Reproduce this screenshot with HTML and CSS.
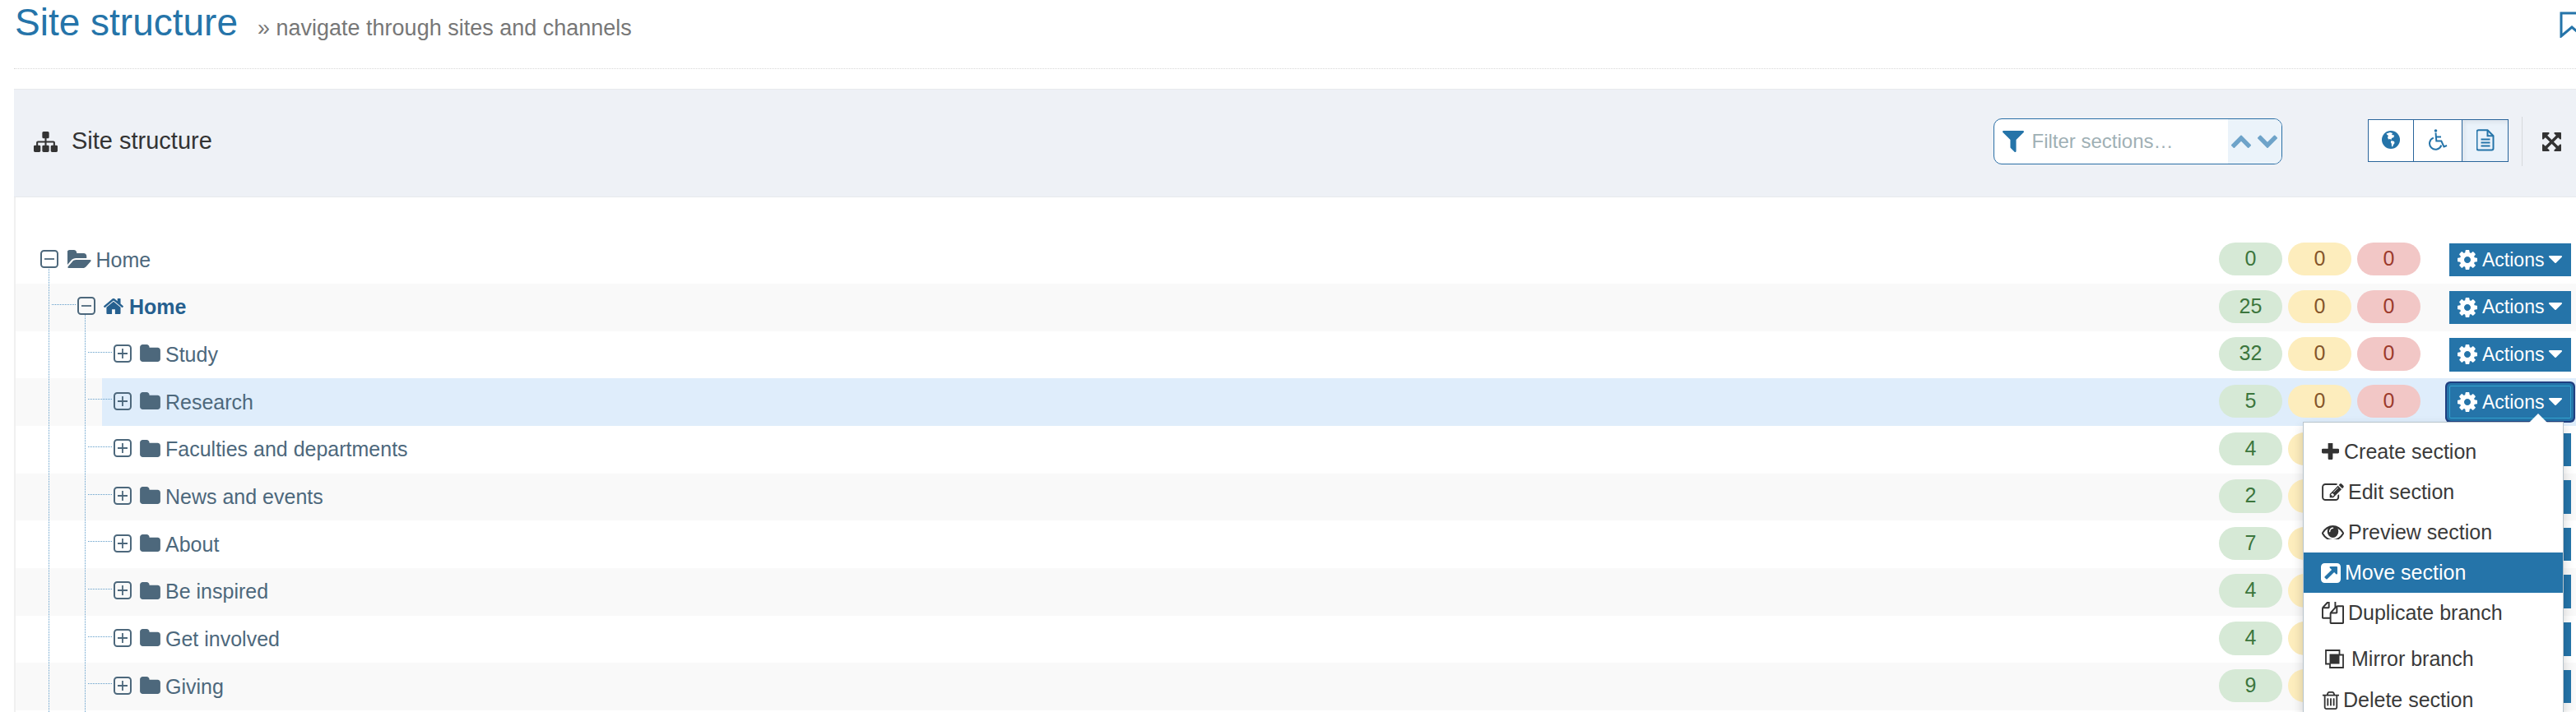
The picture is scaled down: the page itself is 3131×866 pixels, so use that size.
FILE: index.html
```html
<!DOCTYPE html>
<html lang="en">
<head>
    <meta charset="UTF-8">
    <meta name="viewport" content="width=device-width, initial-scale=1.0">
    <title>Site structure</title>
    <link rel="stylesheet" href="styles.css">
</head>
<body>
    <!-- icon sprite -->
    <svg class="sprite" xmlns="http://www.w3.org/2000/svg">
        <symbol id="i-folder" viewBox="64 128 1664 1408"><path d="M1728 608v704q0 92-66 158t-158 66h-1216q-92 0-158-66t-66-158v-960q0-92 66-158t158-66h320q92 0 158 66t66 158v32h672q92 0 158 66t66 158z"/></symbol>
        <symbol id="i-folder-open" viewBox="9 128 1806 1408"><path d="M1815 952q0 31-31 66l-336 396q-43 51-120.5 86.5t-143.5 35.5h-1088q-34 0-60.5-13t-26.5-43q0-31 31-66l336-396q43-51 120.5-86.5t143.5-35.5h1088q34 0 60.5 13t26.5 43zm-343-344v160h-832q-94 0-197 47.5t-164 119.5l-337 396-5 6q0-4-.5-12.5t-.5-12.5v-960q0-92 66-158t158-66h320q92 0 158 66t66 158v32h544q92 0 158 66t66 158z"/></symbol>
        <symbol id="i-home" viewBox="97 256 1600 1280"><path d="M1472 992v480q0 26-19 45t-45 19h-384v-384h-256v384h-384q-26 0-45-19t-19-45v-480q0-1 .5-3t.5-3l575-474 575 474q1 2 1 6zm223-69l-62 74q-8 9-21 11h-3q-13 0-21-7l-692-577-692 577q-12 8-24 7-13-2-21-11l-62-74q-8-10-7-23.5t11-21.5l719-599q32-26 76-26t76 26l244 204v-195q0-14 9-23t23-9h192q14 0 23 9t9 23v408l219 182q10 8 11 21.5t-7 23.5z"/></symbol>
        <symbol id="i-cog" viewBox="128 128 1536 1536"><path d="M1152 896q0-106-75-181t-181-75-181 75-75 181 75 181 181 75 181-75 75-181zm512-109v222q0 12-8 23t-20 13l-185 28q-19 54-39 91 35 50 107 138 10 12 10 25t-9 23q-27 37-99 108t-94 71q-12 0-26-9l-138-108q-44 23-91 38-16 136-29 186-7 28-36 28h-222q-14 0-24.5-8.5t-11.5-21.5l-28-184q-49-16-90-37l-141 107q-10 9-25 9-14 0-25-11-126-114-165-168-7-10-7-23 0-12 8-23 15-21 51-66.5t54-70.5q-27-50-41-99l-183-27q-13-2-21-12.5t-8-23.5v-222q0-12 8-23t19-13l186-28q14-46 39-92-40-57-107-138-10-12-10-24 0-10 9-23 26-36 98.5-107.5t94.5-71.5q13 0 26 10l138 107q44-23 91-38 16-136 29-186 7-28 36-28h222q14 0 24.5 8.5t11.5 21.5l28 184q49 16 90 37l142-107q9-9 24-9 13 0 25 10 129 119 165 170 7 8 7 22 0 12-8 23-15 21-51 66.5t-54 70.5q26 50 41 98l183 28q13 2 21 12.5t8 23.5z"/></symbol>
        <symbol id="i-caret" viewBox="384 640 1024 576"><path d="M1408 704q0 26-19 45l-448 448q-19 19-45 19t-45-19l-448-448q-19-19-19-45t19-45 45-19h896q26 0 45 19t19 45z"/></symbol>
        <symbol id="i-toggle-plus" viewBox="0 0 22 22"><rect x="1" y="1" width="20" height="20" rx="3.5" fill="none" stroke="currentColor" stroke-width="2"/><path d="M5 11h12M11 5v12" fill="none" stroke="currentColor" stroke-width="1.8"/></symbol>
        <symbol id="i-toggle-minus" viewBox="0 0 22 22"><rect x="1" y="1" width="20" height="20" rx="3.5" fill="none" stroke="currentColor" stroke-width="2"/><path d="M5 11h12" fill="none" stroke="currentColor" stroke-width="1.8"/></symbol>
    </svg>

    <header class="page-head">
        <h1 class="page-title">Site structure</h1>
        <p class="page-sub">&raquo; navigate through sites and channels</p>
        <svg class="bookmark" viewBox="0 0 30 32"><path d="M2 2h26v28l-13-11L2 30z"/></svg>
    </header>

    <main class="panel">
        <div class="panel-head">
            <svg class="panel-icon" viewBox="0 128 1792 1536"><path d="M1792 1248v320q0 40-28 68t-68 28h-320q-40 0-68-28t-28-68v-320q0-40 28-68t68-28h96v-192h-512v192h96q40 0 68 28t28 68v320q0 40-28 68t-68 28h-320q-40 0-68-28t-28-68v-320q0-40 28-68t68-28h96v-192h-512v192h96q40 0 68 28t28 68v320q0 40-28 68t-68 28h-320q-40 0-68-28t-28-68v-320q0-40 28-68t68-28h96v-192q0-52 38-90t90-38h512v-192h-96q-40 0-68-28t-28-68v-320q0-40 28-68t68-28h320q40 0 68 28t28 68v320q0 40-28 68t-68 28h-96v192h512q52 0 90 38t38 90v192h96q40 0 68 28t28 68z"/></svg>
            <h2 class="panel-title">Site structure</h2>

            <div class="filter">
                <svg class="filter-icon" viewBox="192 256 1408 1408"><path d="M1595 295q17 41-14 70l-493 493v742q0 42-39 59-13 5-25 5-27 0-45-19l-256-256q-19-19-19-45v-486l-493-493q-31-29-14-70 17-39 59-39h1280q42 0 59 39z"/></svg>
                <input class="filter-input" type="text" placeholder="Filter sections&hellip;">
                <div class="filter-nav">
                    <svg viewBox="101 448 1590 1067"><path d="M1683 1331l-166 165q-19 19-45 19t-45-19l-531-531-531 531q-19 19-45 19t-45-19l-166-165q-19-19-19-45.5t19-45.5l742-741q19-19 45-19t45 19l742 741q19 19 19 45.5t-19 45.5z"/></svg>
                    <svg viewBox="101 501 1590 1067"><path d="M1683 808l-742 741q-19 19-45 19t-45-19l-742-741q-19-19-19-45.5t19-45.5l166-165q19-19 45-19t45 19l531 531 531-531q19-19 45-19t45 19l166 165q19 19 19 45.5t-19 45.5z"/></svg>
                </div>
            </div>

            <div class="view-toggle">
                <button class="view-btn" type="button">
                    <svg class="icon-globe" viewBox="0 0 22 22">
                        <circle cx="11" cy="11" r="11" fill="#2574a9"/>
                        <path fill="#fff" d="M5.5 3.5L10 2l3 1-1 2 3 .5-.5 2.5-2.5 1-.5 2-1.5-1-2 .5-1-2.500 1-2-1.500-1z"/>
                        <path fill="#fff" d="M11.5 12l3.500 1 .5 2-1.500 2-1 2.500-1-.5-.2-3.200-1-1.800z"/>
                    </svg>
                </button>
                <button class="view-btn" type="button">
                    <svg class="icon-stroke icon-wheel" viewBox="0 0 24 26">
                        <circle cx="9.5" cy="2" r="1.8" fill="#2574a9" stroke="none"/>
                        <path d="M9.5 4.500l.8 10h6l3.200 7 3.500-1.500M10 9.500h6"/>
                        <path d="M6.800 10.600a7.300 7.300 0 1 0 9.500 9"/>
                    </svg>
                </button>
                <button class="view-btn view-btn-active" type="button">
                    <svg class="icon-stroke icon-doc" viewBox="0 0 22 27">
                        <path d="M2.500 1.200h11l7 7v15.300a2 2 0 0 1-2 2h-16a2 2 0 0 1-2-2V3.200a2 2 0 0 1 2-2z"/>
                        <path d="M13.500 1.200v7h7"/>
                        <path d="M5.500 12.500h11M5.500 16.500h11M5.500 20.500h11"/>
                    </svg>
                </button>
            </div>
            <span class="head-sep"></span>
            <svg class="expand" viewBox="128 128 1536 1536"><path d="M1411 541l-355 355 355 355 144-144q29-31 70-14 39 17 39 59v448q0 26-19 45t-45 19h-448q-42 0-59-40-17-39 14-69l144-144-355-355-355 355 144 144q31 30 14 69-17 40-59 40h-448q-26 0-45-19t-19-45v-448q0-42 40-59 39-17 69 14l144 144 355-355-355-355-144 144q-19 19-45 19-12 0-24-5-40-17-40-59v-448q0-26 19-45t45-19h448q42 0 59 40 17 39-14 69l-144 144 355 355 355-355-144-144q-31-30-14-69 17-40 59-40h448q26 0 45 19t19 45v448q0 42-39 59-13 5-25 5-26 0-45-19z"/></svg>
        </div>

        <div class="tree">
            <span class="guide guide-1"></span>
            <span class="guide guide-2"></span>

            <div class="row depth-0">
                <div class="row-body">
                    <svg class="toggle"><use href="#i-toggle-minus"/></svg>
                    <svg class="node-icon node-open"><use href="#i-folder-open"/></svg>
                    <span class="label">Home</span>
                    <div class="badges"><span class="badge badge-ok">0</span><span class="badge badge-warn">0</span><span class="badge badge-err">0</span></div>
                    <div class="actions"><button class="btn" type="button"><svg class="btn-cog"><use href="#i-cog"/></svg>Actions<svg class="btn-caret"><use href="#i-caret"/></svg></button></div>
                </div>
            </div>
            <div class="row depth-1">
                <div class="row-body">
                    <svg class="toggle"><use href="#i-toggle-minus"/></svg>
                    <svg class="node-icon node-home"><use href="#i-home"/></svg>
                    <span class="label label-home">Home</span>
                    <div class="badges"><span class="badge badge-ok">25</span><span class="badge badge-warn">0</span><span class="badge badge-err">0</span></div>
                    <div class="actions"><button class="btn" type="button"><svg class="btn-cog"><use href="#i-cog"/></svg>Actions<svg class="btn-caret"><use href="#i-caret"/></svg></button></div>
                </div>
            </div>
            <div class="row depth-2">
                <div class="row-body">
                    <svg class="toggle"><use href="#i-toggle-plus"/></svg>
                    <svg class="node-icon"><use href="#i-folder"/></svg>
                    <span class="label">Study</span>
                    <div class="badges"><span class="badge badge-ok">32</span><span class="badge badge-warn">0</span><span class="badge badge-err">0</span></div>
                    <div class="actions"><button class="btn" type="button"><svg class="btn-cog"><use href="#i-cog"/></svg>Actions<svg class="btn-caret"><use href="#i-caret"/></svg></button></div>
                </div>
            </div>
            <div class="row depth-2">
                <div class="row-body row-selected">
                    <svg class="toggle"><use href="#i-toggle-plus"/></svg>
                    <svg class="node-icon"><use href="#i-folder"/></svg>
                    <span class="label">Research</span>
                    <div class="badges"><span class="badge badge-ok">5</span><span class="badge badge-warn">0</span><span class="badge badge-err">0</span></div>
                    <div class="actions">
                        <button class="btn btn-focus" type="button"><svg class="btn-cog"><use href="#i-cog"/></svg>Actions<svg class="btn-caret"><use href="#i-caret"/></svg></button>
                        <ul class="menu">
                            <li class="menu-item">
                                <svg class="mi mi-create" viewBox="192 192 1408 1408"><path d="M1600 736v192q0 40-28 68t-68 28h-416v416q0 40-28 68t-68 28h-192q-40 0-68-28t-28-68v-416h-416q-40 0-68-28t-28-68v-192q0-40 28-68t68-28h416v-416q0-40 28-68t68-28h192q40 0 68 28t28 68v416h416q40 0 68 28t28 68z"/></svg>
                                Create section
                            </li>
                            <li class="menu-item">
                                <svg class="mi mi-edit" viewBox="0 128 1792 1408"><path d="M888 1184l116-116-152-152-116 116v56h96v96h56zm440-720q-16-16-33 1l-350 350q-17 17-1 33t33-1l350-350q17-17 1-33zm80 594v190q0 119-84.5 203.5t-203.5 84.5h-832q-119 0-203.5-84.5t-84.5-203.5v-832q0-119 84.5-203.5t203.5-84.5h832q63 0 117 25 15 7 18 23 3 17-9 29l-49 49q-14 14-32 8-23-6-45-6h-832q-66 0-113 47t-47 113v832q0 66 47 113t113 47h832q66 0 113-47t47-113v-126q0-13 9-22l64-64q15-15 35-7t20 29zm-96-738l288 288-672 672h-288v-288zm444 132l-92 92-288-288 92-92q28-28 68-28t68 28l152 152q28 28 28 68t-28 68z"/></svg>
                                Edit section
                            </li>
                            <li class="menu-item">
                                <svg class="mi mi-eye" viewBox="0 384 1792 1024" preserveAspectRatio="none"><path d="M1664 960q-152-236-381-353 61 104 61 225 0 185-131.5 316.5t-316.5 131.5-316.5-131.5-131.5-316.5q0-121 61-225-229 117-381 353 133 205 333.5 326.5t434.5 121.5 434.5-121.5 333.5-326.5zm-720-384q0-20-14-34t-34-14q-125 0-214.5 89.5t-89.5 214.5q0 20 14 34t34 14 34-14 14-34q0-86 61-147t147-61q20 0 34-14t14-34zm848 384q0 34-20 69-140 230-376.5 368.5t-499.5 138.5-499.5-139-376.5-368q-20-35-20-69t20-69q140-229 376.5-368t499.5-139 499.5 139 376.5 368q20 35 20 69z"/></svg>
                                Preview section
                            </li>
                            <li class="menu-item menu-item-active">
                                <svg class="mi mi-move" viewBox="128 128 1536 1536"><path d="M1408 928v-480q0-26-19-45t-45-19h-480q-42 0-59 39-17 41 14 70l144 144-534 534q-19 19-19 45t19 45l102 102q19 19 45 19t45-19l534-534 144 144q18 19 45 19 12 0 25-5 39-17 39-59zm256-512v960q0 119-84.5 203.5t-203.5 84.5h-960q-119 0-203.5-84.5t-84.5-203.5v-960q0-119 84.5-203.5t203.5-84.5h960q119 0 203.5 84.5t84.5 203.5z"/></svg>
                                Move section
                            </li>
                            <li class="menu-item">
                                <svg class="mi mi-dup" viewBox="0 128 1792 1664" preserveAspectRatio="none"><path d="M1696 384q40 0 68 28t28 68v1216q0 40-28 68t-68 28h-960q-40 0-68-28t-28-68v-288h-544q-40 0-68-28t-28-68v-672q0-40 20-88t48-76l408-408q28-28 76-48t88-20h416q40 0 68 28t28 68v328q68-40 128-40h416zm-544 213l-299 299h299v-299zm-640-384l-299 299h299v-299zm196 647l316-316v-416h-384v416q0 40-28 68t-68 28h-416v640h512v-256q0-40 20-88t48-76zm956 804v-1152h-384v416q0 40-28 68t-68 28h-416v640h896z"/></svg>
                                Duplicate branch
                            </li>
                            <li class="menu-item menu-item-mirror">
                                <svg class="mi mi-mirror" viewBox="0 0 23 23">
                                    <path d="M1 1h16.500v5.500H22V22H6v-4.500H1z" fill="none" stroke="#333" stroke-width="1.8"/>
                                    <rect x="5.5" y="5.5" width="12" height="12" fill="#333"/>
                                </svg>
                                Mirror branch
                            </li>
                            <li class="menu-item">
                                <svg class="mi mi-trash" viewBox="128 128 1472 1536"><path d="M704 736v576q0 14-9 23t-23 9h-64q-14 0-23-9t-9-23v-576q0-14 9-23t23-9h64q14 0 23 9t9 23zm256 0v576q0 14-9 23t-23 9h-64q-14 0-23-9t-9-23v-576q0-14 9-23t23-9h64q14 0 23 9t9 23zm256 0v576q0 14-9 23t-23 9h-64q-14 0-23-9t-9-23v-576q0-14 9-23t23-9h64q14 0 23 9t9 23zm128 724v-948h-896v948q0 22 7 40.5t14.5 27 10.5 8.5h832q3 0 10.5-8.5t14.5-27 7-40.5zm-672-1076h448l-48-117q-7-9-17-11h-317q-10 2-17 11zm928 32v64q0 14-9 23t-23 9h-96v948q0 83-47 143.5t-113 60.5h-832q-66 0-113-58.5t-47-141.5v-952h-96q-14 0-23-9t-9-23v-64q0-14 9-23t23-9h309l70-167q15-37 54-63t79-26h320q40 0 79 26t54 63l70 167h309q14 0 23 9t9 23z"/></svg>
                                Delete section
                            </li>
                        </ul>
                    </div>
                </div>
            </div>
            <div class="row depth-2">
                <div class="row-body">
                    <svg class="toggle"><use href="#i-toggle-plus"/></svg>
                    <svg class="node-icon"><use href="#i-folder"/></svg>
                    <span class="label">Faculties and departments</span>
                    <div class="badges"><span class="badge badge-ok">4</span><span class="badge badge-warn"></span><span class="badge badge-err"></span></div>
                    <div class="actions"><button class="btn" type="button"><svg class="btn-cog"><use href="#i-cog"/></svg>Actions<svg class="btn-caret"><use href="#i-caret"/></svg></button></div>
                </div>
            </div>
            <div class="row depth-2">
                <div class="row-body">
                    <svg class="toggle"><use href="#i-toggle-plus"/></svg>
                    <svg class="node-icon"><use href="#i-folder"/></svg>
                    <span class="label">News and events</span>
                    <div class="badges"><span class="badge badge-ok">2</span><span class="badge badge-warn"></span><span class="badge badge-err"></span></div>
                    <div class="actions"><button class="btn" type="button"><svg class="btn-cog"><use href="#i-cog"/></svg>Actions<svg class="btn-caret"><use href="#i-caret"/></svg></button></div>
                </div>
            </div>
            <div class="row depth-2">
                <div class="row-body">
                    <svg class="toggle"><use href="#i-toggle-plus"/></svg>
                    <svg class="node-icon"><use href="#i-folder"/></svg>
                    <span class="label">About</span>
                    <div class="badges"><span class="badge badge-ok">7</span><span class="badge badge-warn"></span><span class="badge badge-err"></span></div>
                    <div class="actions"><button class="btn" type="button"><svg class="btn-cog"><use href="#i-cog"/></svg>Actions<svg class="btn-caret"><use href="#i-caret"/></svg></button></div>
                </div>
            </div>
            <div class="row depth-2">
                <div class="row-body">
                    <svg class="toggle"><use href="#i-toggle-plus"/></svg>
                    <svg class="node-icon"><use href="#i-folder"/></svg>
                    <span class="label">Be inspired</span>
                    <div class="badges"><span class="badge badge-ok">4</span><span class="badge badge-warn"></span><span class="badge badge-err"></span></div>
                    <div class="actions"><button class="btn" type="button"><svg class="btn-cog"><use href="#i-cog"/></svg>Actions<svg class="btn-caret"><use href="#i-caret"/></svg></button></div>
                </div>
            </div>
            <div class="row depth-2">
                <div class="row-body">
                    <svg class="toggle"><use href="#i-toggle-plus"/></svg>
                    <svg class="node-icon"><use href="#i-folder"/></svg>
                    <span class="label">Get involved</span>
                    <div class="badges"><span class="badge badge-ok">4</span><span class="badge badge-warn"></span><span class="badge badge-err"></span></div>
                    <div class="actions"><button class="btn" type="button"><svg class="btn-cog"><use href="#i-cog"/></svg>Actions<svg class="btn-caret"><use href="#i-caret"/></svg></button></div>
                </div>
            </div>
            <div class="row depth-2">
                <div class="row-body">
                    <svg class="toggle"><use href="#i-toggle-plus"/></svg>
                    <svg class="node-icon"><use href="#i-folder"/></svg>
                    <span class="label">Giving</span>
                    <div class="badges"><span class="badge badge-ok">9</span><span class="badge badge-warn"></span><span class="badge badge-err"></span></div>
                    <div class="actions"><button class="btn" type="button"><svg class="btn-cog"><use href="#i-cog"/></svg>Actions<svg class="btn-caret"><use href="#i-caret"/></svg></button></div>
                </div>
            </div>
        </div>
    </main>
</body>
</html>
```

FILE: styles.css
```css
html, body {
    height: 866px;
    overflow: hidden;
}

body {
    margin: 0;
    background-color: #fff;
    font-family: "Liberation Sans", Arial, sans-serif;
    color: #333;
}

.sprite {
    display: none;
}

/* page header */

.page-head {
    display: flex;
    align-items: baseline;
    height: 84px;
    box-sizing: border-box;
    margin-left: 17px;
    padding: 1px 0 0 1px;
    border-bottom: 1px dotted #d8d8d8;
}

.page-title {
    margin: 0;
    font-size: 46px;
    font-weight: normal;
    line-height: 52px;
    color: #2574a9;
}

.page-sub {
    margin: 0 0 0 24px;
    font-size: 27px;
    color: #777;
}

.bookmark {
    align-self: flex-start;
    width: 30px;
    height: 32px;
    margin: 13px -10px 0 auto;
    fill: none;
    stroke: #2574a9;
    stroke-width: 3;
}

/* panel */

.panel {
    margin: 24px 0 0 17px;
}

.panel-head {
    display: flex;
    align-items: center;
    height: 132px;
    box-sizing: border-box;
    padding: 0 18px 0 24px;
    background-color: #eef1f6;
    border-top: 1px solid #e7e9ec;
    border-bottom: 1px solid #e7e9ec;
}

.panel-icon {
    width: 29px;
    height: 25px;
    margin-top: -4px;
    fill: #333;
}

.panel-title {
    margin: -6px 0 0 17px;
    font-size: 29px;
    font-weight: normal;
}

.filter {
    display: flex;
    align-items: center;
    width: 351px;
    height: 56px;
    box-sizing: border-box;
    margin: -4px 0 0 auto;
    overflow: hidden;
    background-color: #fff;
    border: 1.5px solid #2a6ea5;
    border-radius: 10px;
}

.filter-icon {
    flex: none;
    width: 26px;
    height: 26px;
    margin-left: 10px;
    fill: #2574a9;
}

.filter-input {
    flex: 1;
    min-width: 0;
    margin-left: 10px;
    padding: 0;
    border: 0;
    outline: 0;
    background: transparent;
    font-family: inherit;
    font-size: 24px;
}

.filter-input::placeholder {
    color: #9fb0b5;
    opacity: 1;
}

.filter-nav {
    display: flex;
    flex: none;
    align-items: center;
    gap: 8px;
    width: 65px;
    height: 100%;
    box-sizing: border-box;
    padding-left: 4px;
    background-color: #ebf3fa;
}

.filter-nav svg {
    width: 24px;
    height: 16px;
    fill: #6ea3c9;
}

.view-toggle {
    display: flex;
    height: 52px;
    box-sizing: border-box;
    margin: -6px 0 0 104px;
    border: 1.5px solid #2a659b;
    background-color: #fff;
}

.view-btn {
    display: flex;
    align-items: center;
    justify-content: center;
    width: 54.5px;
    padding: 0 0 2px;
    border: 0;
    background: transparent;
}

.view-btn + .view-btn {
    width: 59px;
    border-left: 1.5px solid #2a659b;
}

.view-btn-active {
    background-color: #eaf2fa;
    box-shadow: inset 3px 3px 5px rgba(0, 0, 0, .06);
}

.view-btn + .view-btn-active {
    width: 56px;
}

.icon-globe {
    width: 22px;
    height: 22px;
}

.icon-stroke {
    fill: none;
    stroke: #2574a9;
    stroke-width: 2;
}

.icon-wheel {
    width: 24px;
    height: 26px;
}

.icon-doc {
    width: 22px;
    height: 27px;
}

.head-sep {
    width: 1px;
    height: 60px;
    margin: -4px 0 0 16px;
    background-color: #d5d8dc;
}

.expand {
    width: 23px;
    height: 23px;
    margin: -3px 0 0 24px;
    fill: #333;
}

/* tree */

.tree {
    position: relative;
    min-height: 626px;
    box-sizing: border-box;
    padding-top: 47.3px;
    border-left: 2px solid #f0f0f0;
}

.guide {
    position: absolute;
    bottom: 0;
    border-left: 1px dotted #5f9cc9;
}

.guide-1 {
    top: 84px;
    left: 40px;
}

.guide-2 {
    top: 142px;
    left: 84px;
}

.row {
    display: flex;
    height: 57.67px;
}

.row:nth-of-type(even) {
    background-color: #f9f9f9;
}

.depth-0 {
    padding-left: 16px;
}

.depth-1 {
    padding-left: 61px;
}

.depth-2 {
    padding-left: 105px;
}

.row-body {
    position: relative;
    display: flex;
    flex: 1;
    align-items: center;
    min-width: 0;
    padding: 0 6px 0 13.5px;
}

.depth-0 .row-body {
    padding-left: 14px;
}

.depth-1 .row-body::before,
.depth-2 .row-body::before {
    content: "";
    position: absolute;
    top: 25px;
    left: -17px;
    width: 29px;
    border-top: 1px dotted #5f9cc9;
}

.row-selected {
    background-color: #dfedfb;
}

.toggle {
    flex: none;
    width: 22px;
    height: 22px;
    margin-top: -3px;
    color: #4d687c;
}

.node-icon {
    flex: none;
    width: 25px;
    height: 21px;
    margin: -3px 0 0 10.5px;
    fill: #4d687c;
}

.node-open {
    width: 29px;
    height: 22px;
}

.node-home {
    width: 24px;
    height: 19px;
    fill: #26608f;
}

.label {
    margin-left: 6px;
    font-size: 25px;
    color: #4d687c;
}

.label-home {
    margin-left: 7px;
    font-weight: bold;
    color: #26608f;
}

.badges {
    display: flex;
    gap: 7px;
    margin: 0 35px 2px auto;
}

.badge {
    width: 77px;
    height: 40.5px;
    border-radius: 21px;
    font-size: 25px;
    line-height: 38px;
    text-align: center;
}

.badge-ok {
    background-color: #d6e9d6;
    color: #3c763d;
}

.badge-warn {
    background-color: #fdedbd;
    color: #85552a;
}

.badge-err {
    background-color: #f2c7c6;
    color: #9c3a2c;
}

.actions {
    position: relative;
}

.btn {
    display: flex;
    align-items: center;
    width: 148px;
    height: 40.5px;
    padding: 0 0 0 10px;
    border: 0;
    border-radius: 0;
    background-color: #2574a9;
    font-family: inherit;
    font-size: 23px;
    color: #fff;
}

.btn-cog {
    width: 24px;
    height: 24px;
    margin-right: 6px;
    fill: #fff;
}

.btn-caret {
    width: 16px;
    height: 9px;
    margin: -2px 0 0 6px;
    fill: #fff;
}

.btn-focus {
    border-radius: 2px;
    box-shadow: inset 0 0 0 1px #33a5cf, 0 0 0 3px #2574a9, 0 0 0 5px #1f3f80;
}

/* dropdown, sits over the rows below */

.menu {
    position: absolute;
    top: 44px;
    right: 9px;
    z-index: 2;
    width: 317px;
    box-sizing: border-box;
    margin: 0;
    padding: 11.5px 0 0;
    list-style: none;
    background-color: #fff;
    border: 1px solid #b8c4cc;
    box-shadow: 0 6px 12px rgba(0, 0, 0, .18);
}

.menu::before {
    content: "";
    position: absolute;
    top: -11px;
    right: 19px;
    border: solid transparent;
    border-width: 0 11px 11px;
    border-bottom-color: #fff;
}

.menu-item {
    display: flex;
    align-items: center;
    gap: 5px;
    height: 49px;
    padding-left: 22px;
    font-size: 25px;
    color: #3a3a3a;
    fill: #333;
}

.menu-item-active {
    background-color: #2574a9;
    color: #fff;
    fill: #fff;
}

.menu-item-mirror {
    height: 51px;
    padding: 6px 0 0 26px;
}

.mi-create {
    width: 21px;
    height: 21px;
    margin-right: 1px;
}

.mi-edit {
    width: 27px;
    height: 21px;
}

.mi-eye {
    width: 27px;
    height: 17px;
}

.mi-move {
    width: 24px;
    height: 24px;
    margin-left: -1px;
}

.mi-dup {
    width: 27px;
    height: 27px;
}

.mi-mirror {
    width: 23px;
    height: 23px;
    margin-right: 4px;
}

.mi-trash {
    width: 21px;
    height: 22px;
}
```
